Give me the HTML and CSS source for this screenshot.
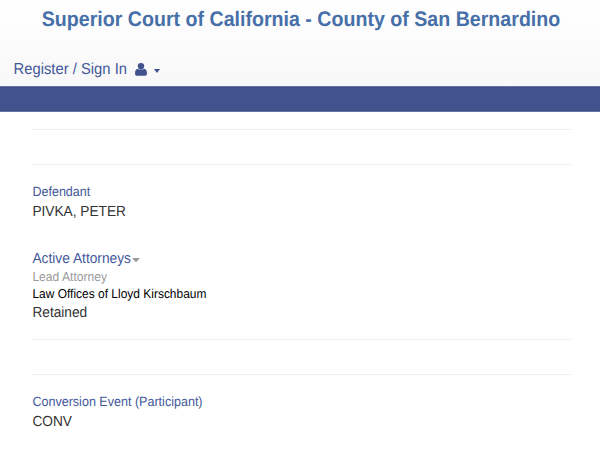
FILE: index.html
```html
<!DOCTYPE html>
<html lang="en">
<head>
<meta charset="utf-8">
<title>Superior Court of California - County of San Bernardino</title>
<link rel="stylesheet" href="styles.css">
</head>
<body>
<header class="masthead">
  <h1 class="title">Superior Court of California - County of San Bernardino</h1>
  <a class="signin"><span class="signin-text">Register / Sign In</span>
    <svg class="user" viewBox="0 0 12 13"><path d="M6 0a3.2 3.2 0 0 1 3.2 3.3C9.200 5.200 7.700 6.700 6 6.700S2.800 5.200 2.800 3.300A3.200 3.200 0 0 1 6 0zM2.900 5.800a4.300 4.300 0 0 0 6.200 0C11.200 6 12 8.200 12 10.400 12 11.900 11.100 12.700 9.800 12.700H2.200C.9 12.700 0 11.900 0 10.400 0 8.200.8 6 2.900 5.800z"/></svg>
    <span class="caret"></span>
  </a>
</header>
<div class="bar"></div>
<main class="content">
  <hr class="rule">
  <hr class="rule">
  <section class="party">
    <p class="label">Defendant</p>
    <p class="value">PIVKA, PETER</p>
  </section>
  <section class="attorneys">
    <p class="heading">Active Attorneys<span class="caret small"></span></p>
    <p class="role">Lead Attorney</p>
    <p class="firm">Law Offices of Lloyd Kirschbaum</p>
    <p class="status">Retained</p>
  </section>
  <hr class="rule">
  <hr class="rule">
  <section class="event">
    <p class="label">Conversion Event (Participant)</p>
    <p class="value">CONV</p>
  </section>
</main>
</body>
</html>
```
FILE: styles.css
```css
body {
  margin: 0;
  background: #fff;
  color: #333;
  font-family: "Liberation Sans", Arial, sans-serif;
  text-rendering: geometricPrecision;
}
p, h1 { margin: 0; }
.title, .signin-text, .content p { transform: scaleY(1.07); }
.masthead {
  height: 86px;
  overflow: hidden;
  background: linear-gradient(#fff, #f8f8f8);
}
.title {
  padding: 7px 0 1px 2px;
  text-align: center;
  white-space: nowrap;
  font-size: 19.63px;
  line-height: 24px;
  color: #476fa8;
}
.signin {
  display: flex;
  align-items: center;
  margin: 28px 0 0 13.5px;
  font-size: 14.8px;
  line-height: 20px;
  color: #43589a;
}
.user {
  width: 12px;
  height: 13px;
  margin: -2px 0 0 8px;
  fill: #41528f;
}
.caret {
  margin: 2px 0 0 7px;
  border: 3.5px solid transparent;
  border-top-color: #41528f;
  border-bottom: 0;
}
.signin .caret { border-top-width: 4px; margin-top: 1px; }
.bar {
  box-sizing: border-box;
  height: 26px;
  border: solid #6673a5;
  border-width: 1px 0;
  background: #41528f;
}
.content { padding: 17px 29px 0 32px; }
.rule {
  height: 1px;
  margin: 0 0 34px;
  border: 0;
  background: #eee;
}
.content section { padding-left: .4px; }
.rule + section { margin-top: -16px; }
.label { font-size: 12.55px; line-height: 18px; color: #43589a; }
.value { font-size: 13.7px; line-height: 21px; }
.attorneys { margin-top: 27px; }
.heading {
  display: flex;
  align-items: center;
  font-size: 13.75px;
  line-height: 20px;
  color: #43589a;
}
.small { margin: 1px 0 0 1px; border-width: 4px 4px 0; border-top-color: #999; }
.role { font-size: 12.1px; line-height: 17px; color: #999; }
.firm { font-size: 11.97px; line-height: 17px; color: #000; }
.status { margin-bottom: 16px; font-size: 13.7px; line-height: 20px; }
```
